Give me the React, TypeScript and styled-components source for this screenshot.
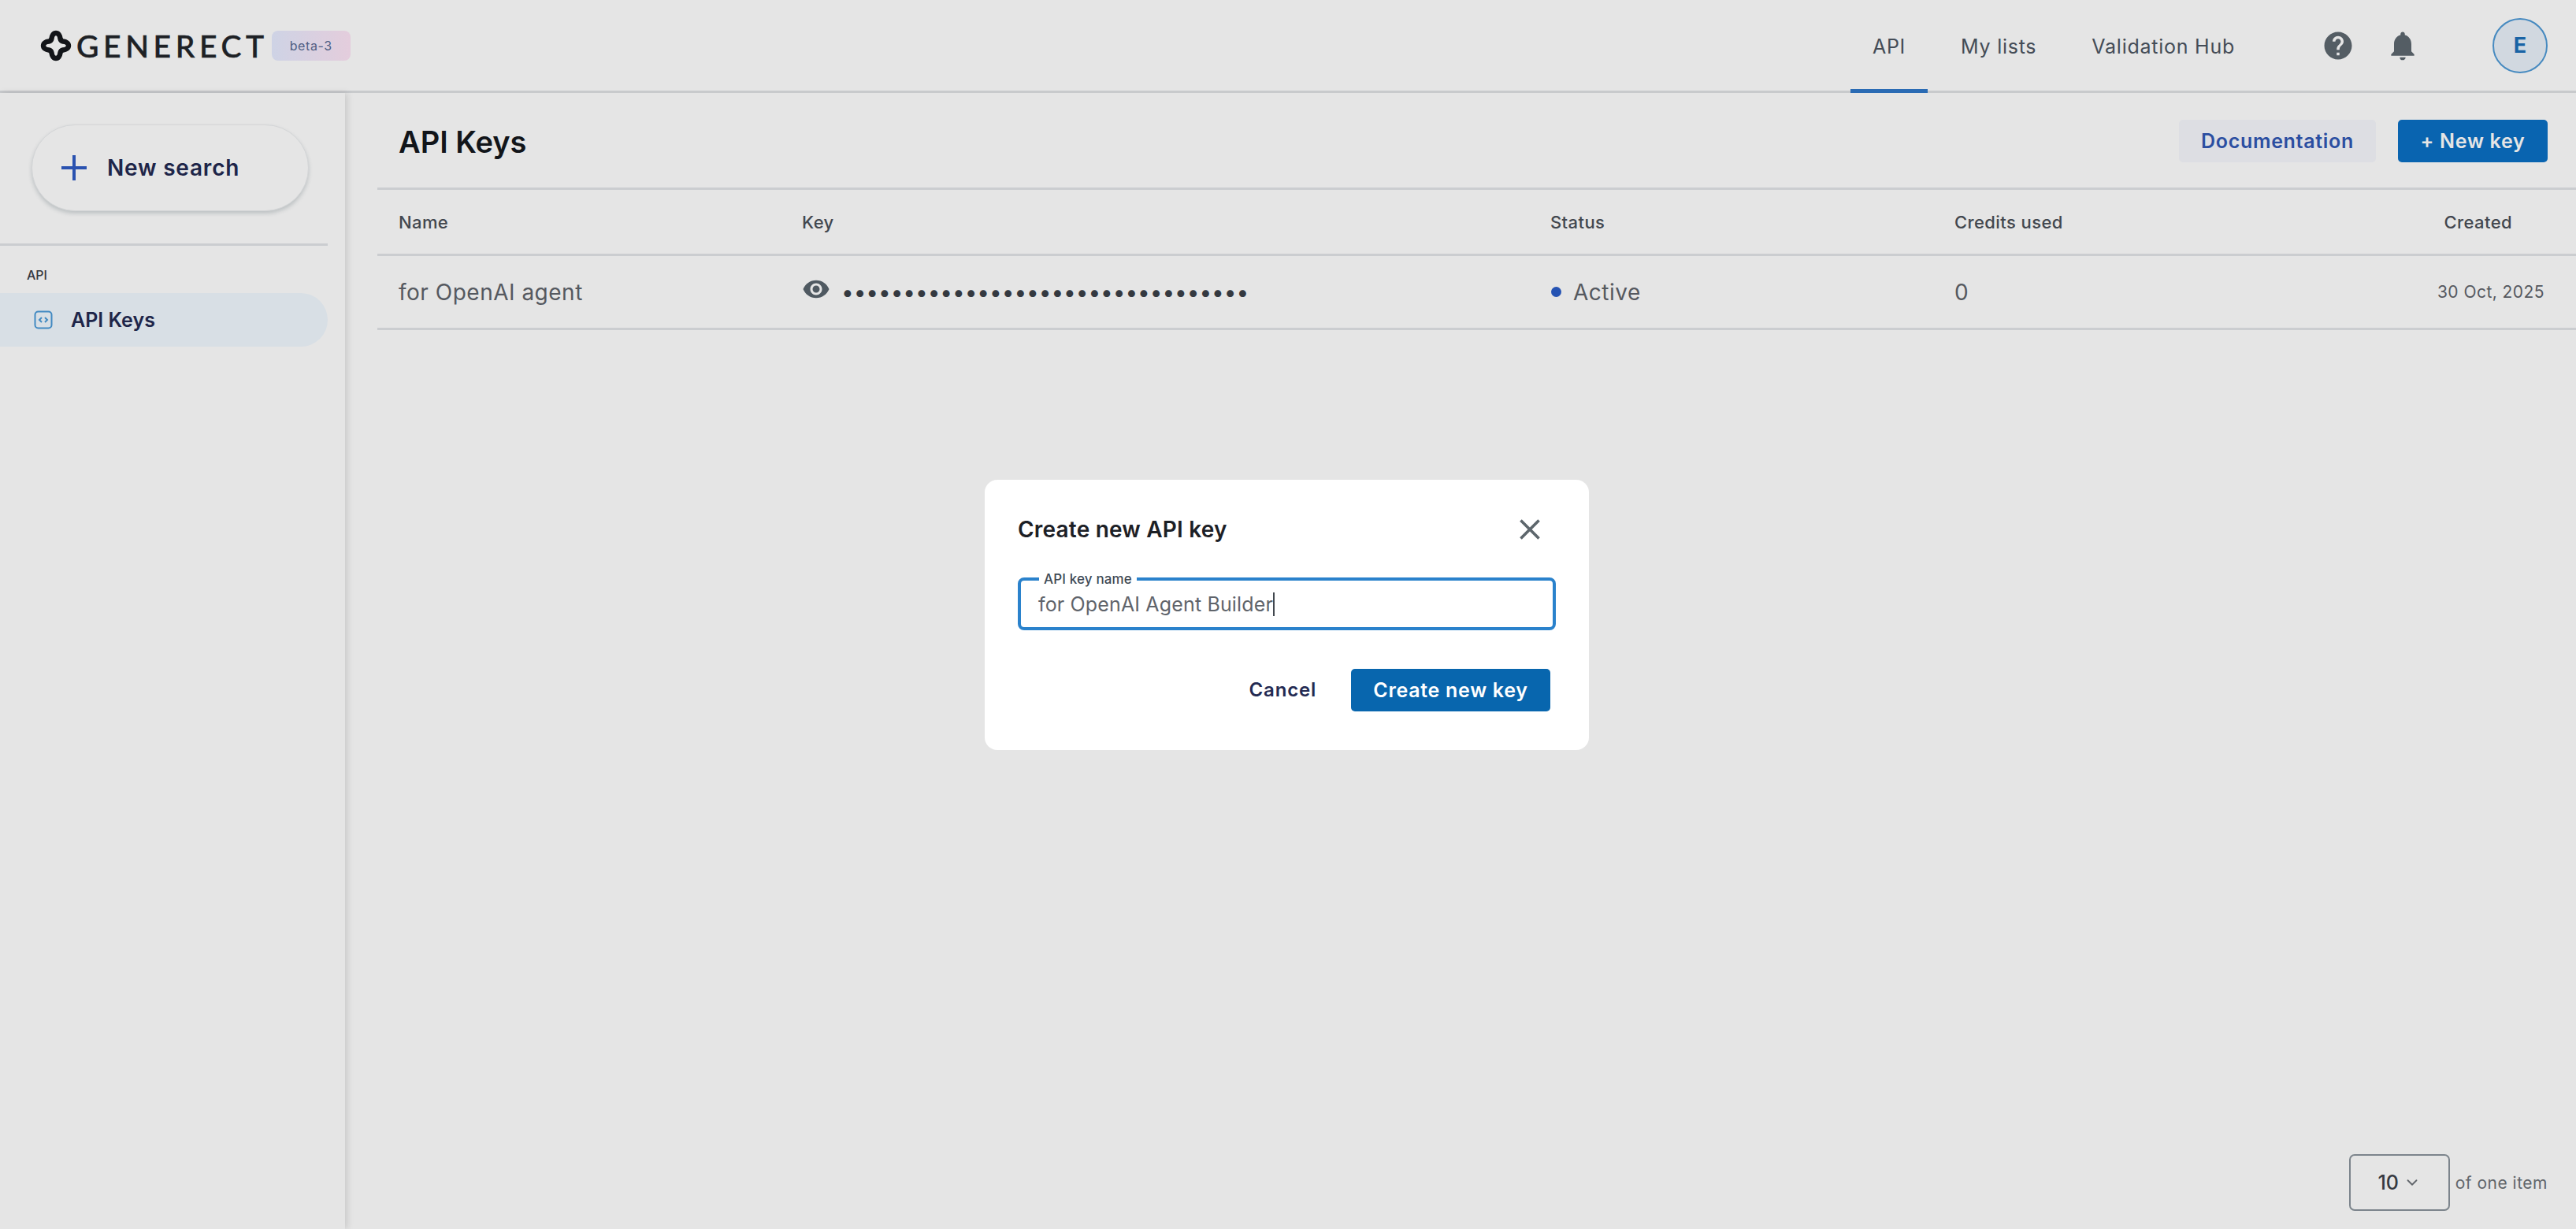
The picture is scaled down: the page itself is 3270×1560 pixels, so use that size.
import React from 'react';
import styled, { createGlobalStyle } from 'styled-components';
import { MdClose, MdHelp, MdNotifications, MdVisibility } from 'react-icons/md';
import { ChevronDown } from 'lucide-react';

const GlobalStyle = createGlobalStyle`
  html, body { margin: 0; padding: 0; background: #fff; }
  body { font-family: Inter, "Liberation Sans", sans-serif; color: #1f2937; }
  * { box-sizing: border-box; }
`;

const Page = styled.div` width: 3270px; height: 1560px; display: flex; flex-direction: column; overflow: hidden; `;

const Header = styled.header`
  height: 118px; flex: none; display: flex; align-items: stretch; padding: 0 36px 0 51px;
  border-bottom: 3px solid #dfe1e4;
`;
const Brand = styled.div` display: flex; align-items: center; gap: 4px; `;
const Wordmark = styled.span` font-family: Lato, sans-serif; font-size: 39px; font-weight: 500; letter-spacing: 5.6px; color: #22252a; margin-left: 2px; -webkit-text-stroke: .5px #22252a; `;
const Badge = styled.span`
  width: 100px; height: 38px; border-radius: 8px; display: flex; align-items: center; justify-content: center;
  background: linear-gradient(90deg, #e6ebff, #fee5f6); color: #5a6a92; font-size: 16px; letter-spacing: .6px;
`;
const TopNav = styled.nav` margin-left: auto; display: flex; align-items: stretch; gap: 14px; `;
const NavTab = styled.a<{ $active?: boolean }>`
  display: flex; align-items: center; padding: 5px 28px 0; margin-bottom: -3px; font-size: 25px; letter-spacing: .75px;
  color: #4c5561; border-bottom: 5px solid ${({ $active }) => ($active ? '#2f78c9' : 'transparent')};
`;
const HeaderIcons = styled.div` display: flex; align-items: center; gap: 39px; margin-left: 82px; color: #5e6870; `;
const Avatar = styled.div`
  width: 70px; height: 70px; margin-left: 92px; align-self: center; border-radius: 50%; border: 2px solid #4f9ad6;
  background: #e9f1fa; color: #1c6fb8; font-size: 27px; font-weight: 700; display: flex; align-items: center; justify-content: center;
`;

const Body = styled.div` flex: 1; display: flex; min-height: 0; `;
const Sidebar = styled.aside`
  width: 438px; flex: none; padding-top: 40px; padding-right: 22px; box-shadow: 3px 0 8px rgba(0, 0, 0, .12);
`;
const NewSearch = styled.button`
  margin-left: 40px; width: 352px; height: 110px; border: 1px solid #eceef0; border-radius: 55px; background: #fff;
  display: flex; align-items: center; gap: 26px; padding: 0 0 0 37px; font: 600 28px Inter, sans-serif; letter-spacing: .8px; color: #232a52;
  box-shadow: 0 3px 5px rgba(60, 80, 90, .22);
`;
const SideDivider = styled.div` height: 3px; background: #e3e5e8; margin-top: 41px; `;
const SideLabel = styled.div` padding: 27px 0 0 34px; font-size: 16px; font-weight: 500; color: #3c4048; line-height: 20px; `;
const SideItem = styled.a`
  display: flex; align-items: center; gap: 23px; height: 68px; margin-top: 13px; padding-left: 43px;
  border-radius: 0 34px 34px 0; background: #f1f9ff; font-size: 25px; font-weight: 600; color: #232a52;
`;

const Main = styled.main` flex: 1; min-width: 0; display: flex; flex-direction: column; padding-left: 41px; position: relative; `;
const MainHead = styled.div` height: 123px; flex: none; padding: 34px 36px 0 27px; display: flex; align-items: flex-start; border-bottom: 3px solid #e3e5e8; `;
const Title = styled.h1` margin: 0; font-size: 38px; line-height: 56px; font-weight: 600; color: #15181d; `;
const HeadActions = styled.div` margin-left: auto; display: flex; gap: 28px; `;
const Button = styled.button<{ $variant: 'primary' | 'soft' }>`
  height: 54px; border: 0; border-radius: 5px; padding: 0; font: 600 25px Inter, sans-serif; letter-spacing: .7px;
  background: ${({ $variant }) => ($variant === 'primary' ? '#0b70c4' : '#f7f8fd')};
  color: ${({ $variant }) => ($variant === 'primary' ? '#fff' : '#3057b4')};
`;
const DocsButton = styled(Button)` width: 250px; `;
const NewKeyButton = styled(Button)` width: 190px; `;

const Row = styled.div<{ $height: number }>`
  display: grid; grid-template-columns: 512px 950px 513px 1fr auto; align-items: center; height: ${({ $height }) => $height}px;
  padding-left: 27px; border-bottom: 3px solid #e3e5e8; flex: none;
`;
const HeadCell = styled.div<{ $end?: boolean }>` font-size: 22px; font-weight: 500; letter-spacing: .4px; color: #4a5058; padding-right: ${({ $end }) => ($end ? '81px' : 0)}; `;
const Cell = styled.div` font-size: 28px; letter-spacing: .5px; color: #5f646b; display: flex; align-items: center; `;
const DateCell = styled.div` font-size: 21px; letter-spacing: .45px; color: #5f646b; padding-right: 40px; `;
const EyeButton = styled.span` display: flex; color: #59646c; margin: -8px 14px 0 0; `;
const Dots = styled.span` font-size: 28px; letter-spacing: -.08px; color: #3a4048; line-height: 1; `;
const StatusDot = styled.span` width: 13px; height: 13px; border-radius: 50%; background: #2a5dc8; margin-right: 15px; margin-left: 1px; `;

const Pager = styled.div` position: absolute; right: 36px; bottom: 23px; display: flex; align-items: center; gap: 7px; `;
const PageSize = styled.div`
  width: 128px; height: 72px; border: 2px solid #8b949c; border-radius: 7px; display: flex; align-items: center; justify-content: center;
  gap: 6px; font-size: 25px; font-weight: 500; color: #3c4048;
`;
const PagerText = styled.span` font-size: 21px; letter-spacing: .5px; color: #6d7278; `;

const Backdrop = styled.div` position: fixed; inset: 0; background: rgba(0, 0, 0, .1); display: flex; align-items: center; justify-content: center; `;
const Dialog = styled.div` width: 767px; height: 343px; margin-left: -3px; background: #fff; border-radius: 16px; padding: 42px 42px 0 42px; `;
const DialogHead = styled.div` display: flex; align-items: center; justify-content: space-between; height: 42px; `;
const DialogTitle = styled.h2` margin: 0; font-size: 28px; font-weight: 600; letter-spacing: .2px; color: #1c2026; `;
const CloseButton = styled.span` display: flex; color: #5d666c; margin-right: 11px; `;
const Field = styled.div`
  position: relative; height: 67px; margin-top: 40px; border: 4px solid #2a82cc; border-radius: 8px;
  display: flex; align-items: center; padding: 1px 0 0 22px; font-size: 25px; letter-spacing: .15px; color: #5f646b;
`;
const FieldLabel = styled.span` position: absolute; left: 23px; top: -12px; background: #fff; padding: 0 6px; font-size: 17px; font-weight: 500; color: #3f4a55; line-height: 20px; `;
const Caret = styled.span` width: 2px; height: 30px; background: #41474e; `;
const DialogActions = styled.div` display: flex; justify-content: flex-end; align-items: center; gap: 44px; margin-top: 49px; padding-right: 7px; `;
const CancelButton = styled.span` font-size: 24px; font-weight: 600; letter-spacing: .8px; color: #232a52; `;
const CreateButton = styled(Button)` width: 253px; background: #0866ae; `;

const LogoIcon = () => (
  <svg width="40" height="40" viewBox="0 0 40 40" fill="none" stroke="#16181c" strokeWidth="6.4" strokeLinejoin="round">
    <path d="M14.5 11C15 7 17 4 20 4C23 4 25 7 25.5 11C25.9 13 27 14.1 29 14.5C33 15 36 17 36 20C36 23 33 25 29 25.5C27 25.9 25.9 27 25.5 29C25 33 23 36 20 36C17 36 15 33 14.5 29C14.1 27 13 25.9 11 25.5C7 25 4 23 4 20C4 17 7 15 11 14.5C13 14.1 14.1 13 14.5 11Z" />
  </svg>
);

const PlusIcon = () => (
  <svg width="32" height="32" viewBox="0 0 32 32" stroke="#2f5cc4" strokeWidth="4">
    <path d="M16 0V32M0 16H32" />
  </svg>
);

const CodeIcon = () => (
  <svg width="24" height="24" viewBox="0 0 24 24" fill="none" stroke="#4a9ad8" strokeWidth="2">
    <rect x="1.5" y="1.5" width="21" height="21" rx="4" />
    <path d="M10 9l-3 3 3 3M14 9l3 3-3 3" />
  </svg>
);

export default function App() {
  return (
    <>
      <GlobalStyle />
      <Page>
        <Header>
          <Brand>
            <LogoIcon />
            <Wordmark>GENERECT</Wordmark>
            <Badge>beta-3</Badge>
          </Brand>
          <TopNav>
            <NavTab $active>API</NavTab>
            <NavTab>My lists</NavTab>
            <NavTab>Validation Hub</NavTab>
          </TopNav>
          <HeaderIcons>
            <MdHelp size={42} />
            <MdNotifications size={44} />
          </HeaderIcons>
          <Avatar>E</Avatar>
        </Header>
        <Body>
          <Sidebar>
            <NewSearch><PlusIcon />New search</NewSearch>
            <SideDivider />
            <SideLabel>API</SideLabel>
            <SideItem><CodeIcon />API Keys</SideItem>
          </Sidebar>
          <Main>
            <MainHead>
              <Title>API Keys</Title>
              <HeadActions>
                <DocsButton $variant="soft">Documentation</DocsButton>
                <NewKeyButton $variant="primary">+ New key</NewKeyButton>
              </HeadActions>
            </MainHead>
            <Row $height={84}>
              <HeadCell>Name</HeadCell>
              <HeadCell>Key</HeadCell>
              <HeadCell>Status</HeadCell>
              <HeadCell>Credits used</HeadCell>
              <HeadCell $end>Created</HeadCell>
            </Row>
            <Row $height={94}>
              <Cell>for OpenAI agent</Cell>
              <Cell>
                <EyeButton><MdVisibility size={36} /></EyeButton>
                <Dots>•••••••••••••••••••••••••••••••••</Dots>
              </Cell>
              <Cell><StatusDot />Active</Cell>
              <Cell>0</Cell>
              <DateCell>30 Oct, 2025</DateCell>
            </Row>
            <Pager>
              <PageSize>10<ChevronDown size={22} color="#6d7278" /></PageSize>
              <PagerText>of one item</PagerText>
            </Pager>
          </Main>
        </Body>
      </Page>
      <Backdrop>
        <Dialog>
          <DialogHead>
            <DialogTitle>Create new API key</DialogTitle>
            <CloseButton><MdClose size={44} /></CloseButton>
          </DialogHead>
          <Field>
            <FieldLabel>API key name</FieldLabel>
            for OpenAI Agent Builder<Caret />
          </Field>
          <DialogActions>
            <CancelButton>Cancel</CancelButton>
            <CreateButton $variant="primary">Create new key</CreateButton>
          </DialogActions>
        </Dialog>
      </Backdrop>
    </>
  );
}
